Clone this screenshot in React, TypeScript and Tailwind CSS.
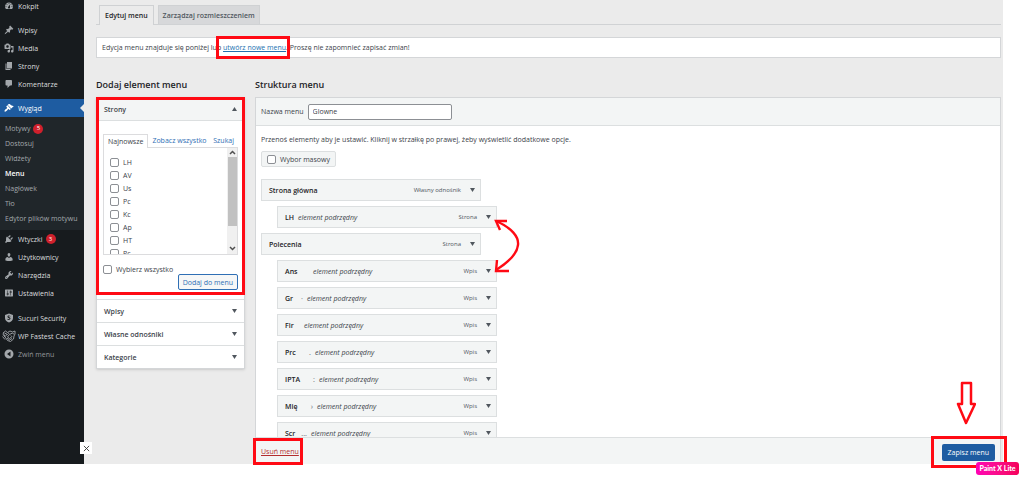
import React from "react";
import clsx from "clsx";

const ICONS = {
  dashboard:
    "M3.76 16h12.48c1.1-1.37 1.76-3.11 1.76-5 0-4.42-3.58-8-8-8s-8 3.58-8 8c0 1.89.66 3.63 1.76 5zM10 4c.55 0 1 .45 1 1s-.45 1-1 1-1-.45-1-1 .45-1 1-1zM6 6c.55 0 1 .45 1 1s-.45 1-1 1-1-.45-1-1 .45-1 1-1zm8 0c.55 0 1 .45 1 1s-.45 1-1 1-1-.45-1-1 .45-1 1-1zm-5.37 5.55L12 7v6c0 1.1-.9 2-2 2s-2-.9-2-2c0-.57.24-1.08.63-1.45zM4 10c.55 0 1 .45 1 1s-.45 1-1 1-1-.45-1-1 .45-1 1-1zm12 0c.55 0 1 .45 1 1s-.45 1-1 1-1-.45-1-1 .45-1 1-1z",
  pin: "M10.44 3.02l1.82-1.82 6.36 6.35-1.83 1.82c-1.05-.68-2.48-.57-3.41.36l-.75.75c-.92.93-1.04 2.35-.35 3.41l-1.83 1.82-2.41-2.41-2.8 2.79c-.42.42-3.38 2.71-3.8 2.29s1.86-3.39 2.28-3.81l2.79-2.79L4.1 9.36l1.83-1.82c1.05.69 2.48.57 3.4-.36l.75-.75c.93-.92 1.05-2.35.36-3.41z",
  media:
    "M13 11V4c0-.55-.45-1-1-1h-1.67L9 1H5L3.67 3H2c-.55 0-1 .45-1 1v7c0 .55.45 1 1 1h10c.55 0 1-.45 1-1zM7 4.5c1.38 0 2.5 1.12 2.5 2.5S8.38 9.5 7 9.5 4.5 8.38 4.5 7 5.62 4.5 7 4.5zM14 6h5v10.5c0 1.38-1.12 2.5-2.5 2.5S14 17.88 14 16.5s1.12-2.5 2.5-2.5c.17 0 .34.02.5.05V9h-3V6zm-4 8.05V13h2v3.5c0 1.38-1.12 2.5-2.5 2.5S7 17.88 7 16.5 8.12 14 9.5 14c.17 0 .34.02.5.05z",
  page: "M6 15V2h10v13H6zm-1 1h8v2H3V5h2v11z",
  comment: "M5 2h9c1.1 0 2 .9 2 2v7c0 1.1-.9 2-2 2h-2l-5 5v-5H5c-1.1 0-2-.9-2-2V4c0-1.1.9-2 2-2z",
  brush:
    "M14.48 11.06L7.41 3.99l1.5-1.5c.5-.56 2.3-.47 3.51.32 1.21.8 1.43 1.28 2.91 2.1 1.18.64 2.45 1.26 4.45.85zm-.71.71L6.7 4.7 4.93 6.47c-.39.39-.39 1.02 0 1.41l1.06 1.06c.39.39.39 1.03 0 1.42-.6.6-1.43 1.11-2.21 1.69-.35.26-.7.53-1.01.84C1.43 14.23.4 16.08 1.4 17.07c.99 1 2.84-.03 4.18-1.36.31-.31.58-.66.85-1.02.57-.78 1.08-1.61 1.69-2.21.39-.39 1.02-.39 1.41 0l1.06 1.06c.39.39 1.02.39 1.41 0z",
  plug: "M13.11 4.36L9.87 7.6 8 5.73l3.24-3.24c.35-.34 1.05-.2 1.56.32.52.51.66 1.21.31 1.55zm-8 1.77l.91-1.12 9.01 9.01-1.19.84c-.71.71-2.63 1.16-3.82 1.16H6.14L4.9 17.26c-.59.59-1.54.59-2.12 0-.59-.58-.59-1.53 0-2.12l1.24-1.24v-3.88c0-1.13.4-3.19 1.09-3.89zm7.26 3.97l3.24-3.24c.34-.35 1.04-.21 1.55.31.52.51.66 1.21.31 1.55l-3.24 3.25z",
  users:
    "M10 9.25c-2.27 0-2.73-3.44-2.73-3.44C7 4.02 7.82 2 9.97 2c2.16 0 2.98 2.02 2.71 3.81 0 0-.41 3.44-2.68 3.44zm0 2.57L12.72 10c2.39 0 4.52 2.33 4.52 4.53v2.49s-3.65 1.13-7.24 1.13c-3.65 0-7.24-1.13-7.24-1.13v-2.49c0-2.25 1.94-4.48 4.47-4.48z",
  tools:
    "M16.68 9.77c-1.34 1.34-3.3 1.67-4.95.99l-5.41 6.52c-.99.99-2.59.99-3.58 0s-.99-2.59 0-3.57l6.52-5.42c-.68-1.65-.35-3.61.99-4.95 1.28-1.28 3.12-1.62 4.72-1.06l-2.89 2.89 2.82 2.82 2.86-2.87c.53 1.58.18 3.39-1.08 4.65zM3.81 16.21c.4.39 1.04.39 1.43 0 .4-.4.4-1.04 0-1.43-.39-.4-1.03-.4-1.43 0-.39.39-.39 1.03 0 1.43z",
  settings:
    "M18 16V4c0-.55-.45-1-1-1H3c-.55 0-1 .45-1 1v12c0 .55.45 1 1 1h14c.55 0 1-.45 1-1zM8 11h1c.55 0 1 .45 1 1s-.45 1-1 1H8v1.5c0 .28-.22.5-.5.5s-.5-.22-.5-.5V13H6c-.55 0-1-.45-1-1s.45-1 1-1h1V5.5c0-.28.22-.5.5-.5s.5.22.5.5V11zm5-2h-1c-.55 0-1-.45-1-1s.45-1 1-1h1V5.5c0-.28.22-.5.5-.5s.5.22.5.5V7h1c.55 0 1 .45 1 1s-.45 1-1 1h-1v5.5c0 .28-.22.5-.5.5s-.5-.22-.5-.5V9z",
  shield:
    "M10 1l8 3v6c0 4-3 7-8 9-5-2-8-5-8-9V4zm3 5c-3-2-6-1-6 1.5 0 3 4 2 4 4 0 1-2 1-4 0v2c3 1 6 0 6-2.5 0-3-4-2-4-4 0-1 2-1 4 0z",
  collapse: "M10 1a9 9 0 1 0 0 18 9 9 0 0 0 0-18zM13 5v10L6 10z",
};

type IconName = keyof typeof ICONS;

const NavIcon = ({ name }: { name: IconName | "tiger" }) =>
  name === "tiger" ? (
    <svg viewBox="0 0 28 24" className="w-[14px] h-[12px] shrink-0" fill="none" stroke="currentColor" strokeWidth="1.8">
      <path d="M2 6l5-4 4 3 5-3 5 2 5-2v6l-2 4-1 6-6 5-6-2-4-6z" />
      <path d="M5 6l6 3-4 2M12 5l3 4 6-3M14 10l-3 4 4 3 5-4-2-2M21 7l3 1M2 9l5 6M10 16l5 4 5-3M1 13l5 6" />
    </svg>
  ) : (
    <svg viewBox="0 0 20 20" className="size-[10px] shrink-0" fill="currentColor" fillRule="evenodd">
      <path d={ICONS[name]} />
    </svg>
  );

const Badge = ({ count }: { count: number }) => (
  <span className="size-[10px] ml-[3px] rounded-full bg-[#d0202c] text-white flex items-center justify-center text-[6px]">
    {count}
  </span>
);

const NavItem = ({ icon, label, badge, active, muted }: { icon: IconName | "tiger"; label: string; badge?: number; active?: boolean; muted?: boolean }) => (
  <a
    href="#"
    className={clsx(
      "relative flex items-center h-[18px]",
      active ? "bg-[#1e5ca1] text-white" : muted ? "text-[#93979a]" : "text-[#dcdddf]"
    )}
  >
    <span className={clsx("flex justify-center w-[18px]", active ? "text-white" : "text-[#a3a7ab]")}>
      <NavIcon name={icon} />
    </span>
    {label}
    {badge && <Badge count={badge} />}
    {active && (
      <span className="absolute right-0 top-[5px] border-y-4 border-y-transparent border-r-4 border-r-[#ebebeb]" />
    )}
  </a>
);

const SUBMENU = ["Motywy", "Dostosuj", "Widżety", "Menu", "Nagłówek", "Tło", "Edytor plików motywu"];

const Sidebar = () => (
  <nav className="w-[84px] shrink-0 bg-[#171b1e] text-[7px] whitespace-nowrap">
    <div className="-mt-[3px]">
      <NavItem icon="dashboard" label="Kokpit" />
    </div>
    <div className="mt-[6px]">
      <NavItem icon="pin" label="Wpisy" />
      <NavItem icon="media" label="Media" />
      <NavItem icon="page" label="Strony" />
      <NavItem icon="comment" label="Komentarze" />
    </div>
    <div className="mt-[6px]">
      <NavItem icon="brush" label="Wygląd" active />
      <div className="py-1 bg-[#20262a]">
        {SUBMENU.map((item) => (
          <a
            key={item}
            href="#"
            className={clsx(
              "flex items-center h-[15px] pl-[5px]",
              item === "Menu" ? "text-white font-semibold" : "text-[#a3a8ac]"
            )}
          >
            {item}
            {item === "Motywy" && <Badge count={5} />}
          </a>
        ))}
      </div>
      <NavItem icon="plug" label="Wtyczki" badge={3} />
      <NavItem icon="users" label="Użytkownicy" />
      <NavItem icon="tools" label="Narzędzia" />
      <NavItem icon="settings" label="Ustawienia" />
    </div>
    <div className="mt-[7px]">
      <NavItem icon="shield" label="Sucuri Security" />
      <NavItem icon="tiger" label="WP Fastest Cache" />
      <NavItem icon="collapse" label="Zwiń menu" muted />
    </div>
  </nav>
);

const Caret = ({ up }: { up?: boolean }) => (
  <svg viewBox="0 0 5 4" className="w-[5px] h-[4px] shrink-0" fill="#50575e">
    <path d={up ? "M2.5 0L5 4H0z" : "M0 0h5L2.5 4z"} />
  </svg>
);

const CHECKBOX = "appearance-none size-[9px] shrink-0 rounded-[2px] border border-[#8c8f94] bg-white";

const PAGES = ["LH", "AV", "Us", "Pc", "Kc", "Ap", "HT", "Pc"];

const PagesBox = () => (
  <div className="relative">
    <button className="w-full h-[23px] px-[7px] flex items-center justify-between bg-[#f3f5f5] border-b border-[#dcdfe0] font-semibold">
      Strony
      <Caret up />
    </button>
    <div className="px-[6px] pt-[13px] pb-[9px]">
      <div className="flex items-end text-[#2f6fb5]">
        <button className="h-[14px] px-1 -mb-px relative bg-white border border-b-0 border-[#dcdcde] text-[#3c434a]">
          Najnowsze
        </button>
        <button className="h-[13px] pl-1">Zobacz wszystko</button>
        <button className="h-[13px] ml-auto pr-1">Szukaj</button>
      </div>
      <div className="flex h-[108px] border border-[#dcdcde] overflow-hidden">
        <ul className="flex-1 pt-[8px] pl-[6px]">
          {PAGES.map((page, idx) => (
            <li key={idx} className="h-[13px]">
              <label className="flex items-center gap-1 h-[13px]">
                <input type="checkbox" className={CHECKBOX} />
                {page}
              </label>
            </li>
          ))}
        </ul>
        <div className="w-[10px] flex flex-col items-center bg-[#f0f0f0]">
          <svg viewBox="0 0 9 9" className="size-[9px]" fill="none" stroke="#505050" strokeWidth="1.5">
            <path d="M2 6l2.5-2.5L7 6" />
          </svg>
          <div className="w-[9px] h-[69px] bg-[#c1c1c1]" />
          <svg viewBox="0 0 9 9" className="size-[9px] mt-auto mb-px" fill="none" stroke="#505050" strokeWidth="1.5">
            <path d="M2 3l2.5 2.5L7 3" />
          </svg>
        </div>
      </div>
      <label className="flex items-center gap-1 mt-[9px] h-[10px]">
        <input type="checkbox" className={CHECKBOX} />
        Wybierz wszystko
      </label>
      <div className="flex justify-end">
        <button className="h-[16px] px-[4px] rounded-[2px] border border-[#2f6fb5] bg-[#f6f7f7] text-[#2f6fb5] whitespace-nowrap">
          Dodaj do menu
        </button>
      </div>
    </div>
    <div className="absolute -inset-x-px -top-px bottom-[4px] border-3 border-[#ff0a14] pointer-events-none" />
  </div>
);

const MENU_ITEMS = [
  { title: "Strona główna", type: "Własny odnośnik" },
  { title: "LH", type: "Strona", slot: "w-[13px]" },
  { title: "Polecenia", type: "Strona" },
  { title: "Ans", type: "Wpis", slot: "w-[28px]" },
  { title: "Gr", rest: "·", type: "Wpis", slot: "w-[22px]" },
  { title: "Fir", type: "Wpis", slot: "w-[19px]" },
  { title: "Prc", rest: ".", type: "Wpis", slot: "w-[30px]" },
  { title: "IPTA", rest: ":", type: "Wpis", slot: "w-[34px]" },
  { title: "Mię", rest: "›", type: "Wpis", slot: "w-[32px]" },
  { title: "Scr", rest: "...", type: "Wpis", slot: "w-[26px]" },
];

const MenuItem = ({ item }: { item: (typeof MENU_ITEMS)[number] }) => (
  <li
    className={clsx(
      "flex items-center w-[220px] h-[22px] shrink-0 pl-[7px] pr-[5px] border border-[#dcdfe0] bg-[#f3f5f5]",
      item.slot && "ml-4"
    )}
  >
    {item.slot ? (
      <>
        <span className={clsx("flex justify-between pr-[4px] font-semibold text-[#1d2327]", item.slot)}>
          {item.title}
          {item.rest && <span className="text-[#8a8f94]">{item.rest}</span>}
        </span>
        <em>element podrzędny</em>
      </>
    ) : (
      <span className="font-semibold text-[#1d2327]">{item.title}</span>
    )}
    <span className="ml-auto mr-[9px] text-[#50575e] text-[6px]">{item.type}</span>
    <Caret />
  </li>
);

const SwapArrow = () => (
  <svg viewBox="0 0 28 56" className="absolute left-[237px] top-[119px] w-[28px] h-[56px]" fill="none" stroke="#ff0a14" strokeWidth="2.4">
    <path d="M3 4c16 7 23 16 22 24-1 9-9 17-22 25" />
    <path d="M14 4H3l4 9M4 43l-1 11h13" />
  </svg>
);

export default function App() {
  return (
    <div className="min-h-screen bg-white font-['Open_Sans','Noto_Sans',sans-serif] text-[7px] leading-[11px] text-[#3c434a]">
      <div className="relative flex mr-[21px] bg-[#ebebeb]">
        <Sidebar />

        <main className="flex-1 min-w-0 pl-3 pr-[2px] pt-[5px]">
          <div className="flex gap-1 pl-[3px] border-b border-[#d0d2d4] font-semibold">
            <button className="h-[20px] px-[5px] -mb-px border border-b-0 border-[#cfd1d3] bg-[#ebebeb] text-[#1d2327]">
              Edytuj menu
            </button>
            <button className="h-[19px] px-[4px] border border-b-0 border-[#cfd1d3] bg-[#d7d8da] text-[#50575e]">
              Zarządzaj rozmieszczeniem
            </button>
          </div>

          <p className="mt-3 h-[21px] flex items-center pl-[5px] bg-white border border-[#d4d6d8]">
            <span>
              Edycja menu znajduje się poniżej lub{" "}
              <span className="relative">
                <a href="#" className="text-[#2271b1] underline">utwórz nowe menu</a>
                <span className="absolute -top-[7px] -bottom-[7px] -left-[7px] -right-[4px] border-3 border-[#ff0a14] pointer-events-none" />
              </span>
              . Proszę nie zapomnieć zapisać zmian!
            </span>
          </p>

          <div className="flex gap-[10px] mt-5 items-start">
            <section className="w-[149px] shrink-0">
              <h2 className="text-[9px] leading-[13px] font-semibold text-[#1d2327]">Dodaj element menu</h2>
              <div className="mt-[6px] border border-[#d4d6d8] bg-white shadow-sm">
                <PagesBox />
                {["Wpisy", "Własne odnośniki", "Kategorie"].map((title) => (
                  <button key={title} className="w-full h-[23px] px-[7px] flex items-center justify-between border-t border-[#dcdfe0] font-semibold">
                    {title}
                    <Caret />
                  </button>
                ))}
              </div>
            </section>

            <section className="flex-1 min-w-0">
              <h2 className="text-[9px] leading-[13px] font-semibold text-[#1d2327]">Struktura menu</h2>
              <div className="relative mt-[6px] border border-b-0 border-[#d4d6d8] bg-white">
                <div className="flex items-center h-[28px] pl-[5px] gap-[4px] bg-[#f3f5f5] border-b border-[#dcdfe0]">
                  <label htmlFor="menu-name">Nazwa menu</label>
                  <input
                    id="menu-name"
                    defaultValue="Glowne"
                    className="w-[144px] h-[16px] px-1 rounded-[2px] border border-[#8c8f94] bg-white"
                  />
                </div>
                <div className="h-[311px] overflow-hidden pl-[5px] pt-2">
                  <p>Przenoś elementy aby je ustawić. Kliknij w strzałkę po prawej, żeby wyświetlić dodatkowe opcje.</p>
                  <label className="inline-flex items-center gap-1 mt-[6px] h-[16px] px-[5px] border border-[#dcdfe0] rounded-[2px] bg-[#f3f5f5]">
                    <input type="checkbox" className={CHECKBOX} />
                    Wybor masowy
                  </label>
                  <ul className="flex flex-col gap-[5px] mt-3">
                    {MENU_ITEMS.map((item, idx) => (
                      <MenuItem key={idx} item={item} />
                    ))}
                  </ul>
                </div>
                <div className="flex items-center justify-between h-[27px] px-[5px] border-t border-[#dcdfe0] bg-[#f3f5f5]">
                  <span className="relative">
                    <a href="#" className="text-[#b32d2e] underline">Usuń menu</a>
                    <span className="absolute -top-[8px] -bottom-[8px] -left-[8px] -right-[4px] border-3 border-[#ff0a14] pointer-events-none" />
                  </span>
                  <span className="relative flex mt-[2px]">
                    <button className="h-[17px] px-[6px] rounded-[2px] bg-[#1e5ca1] text-white">Zapisz menu</button>
                    <span className="absolute -top-[8px] -bottom-[7px] -left-[11px] -right-[12px] border-3 border-[#ff0a14] pointer-events-none" />
                    <svg viewBox="0 0 20 44" className="absolute left-[14px] -top-[63px] w-[20px] h-[44px]" fill="none" stroke="#ff0a14" strokeWidth="2.5" strokeLinejoin="round">
                      <path d="M6 2h9v21h4l-9 19L2 23h4z" />
                    </svg>
                  </span>
                </div>
                <SwapArrow />
              </div>
            </section>
          </div>
        </main>

        <button aria-label="Zamknij" className="absolute left-[80px] bottom-[10px] size-[12px] bg-white flex items-center justify-center">
          <svg viewBox="0 0 8 8" className="size-[7px]" stroke="#333" strokeWidth="1">
            <path d="M1 1l6 6M7 1L1 7" />
          </svg>
        </button>
        <span className="absolute -right-[16px] -bottom-[11px] w-[43px] h-[13px] rounded-[3px] bg-linear-to-r from-[#ff00b4] to-[#f5005a] text-white font-['Lato'] font-black text-[7px] leading-[13px] text-center whitespace-nowrap">
          Paint X Lite
        </span>
      </div>
    </div>
  );
}
